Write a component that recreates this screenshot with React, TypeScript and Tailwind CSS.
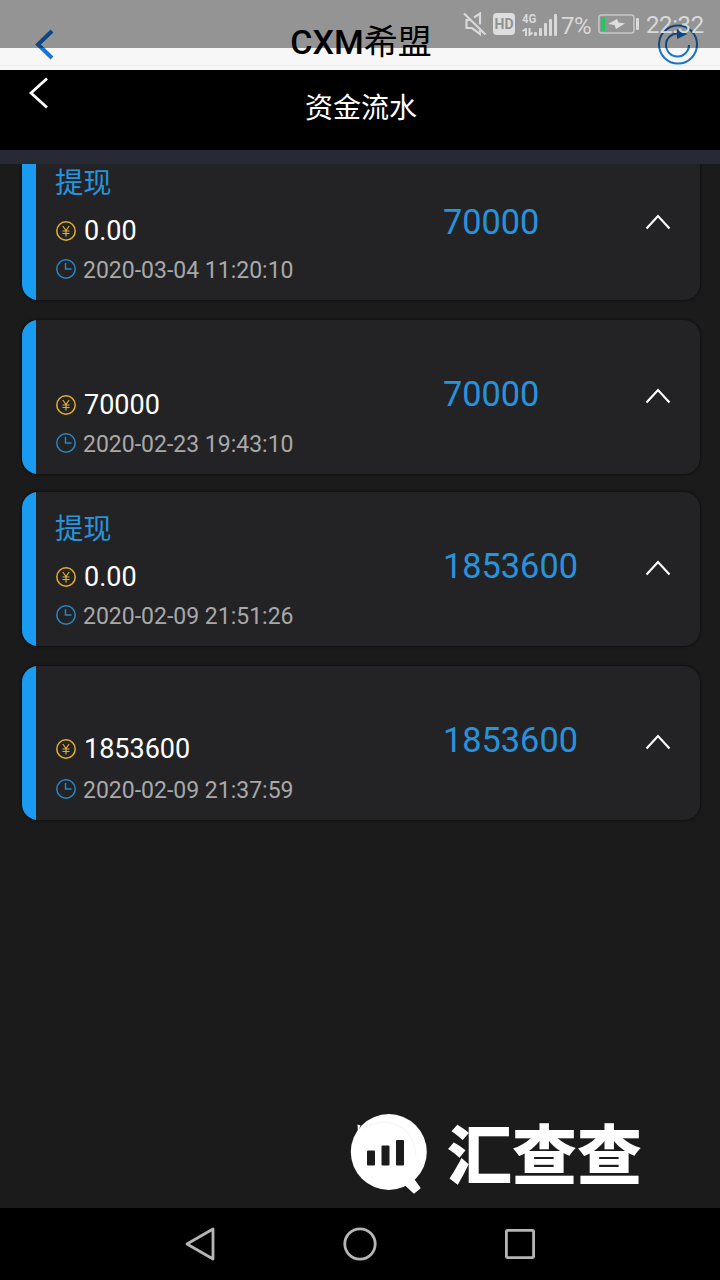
import React from 'react';

interface FlowRecord {
  label: string;
  balance: string;
  time: string;
  amount: string;
  cardClass: string;
  balanceClass: string;
  amountClass: string;
}

const records: FlowRecord[] = [
  { label: '提现', balance: '0.00', time: '2020-03-04 11:20:10', amount: '70000', cardClass: '-mt-[18px]', balanceClass: 'pt-[13px] pb-[7px]', amountClass: 'pt-[4px]' },
  { label: '', balance: '70000', time: '2020-02-23 19:43:10', amount: '70000', cardClass: 'mt-5', balanceClass: 'pt-[13px] pb-[7px]', amountClass: '' },
  { label: '提现', balance: '0.00', time: '2020-02-09 21:51:26', amount: '1853600', cardClass: 'mt-[18px]', balanceClass: 'pt-[13px] pb-[7px]', amountClass: '' },
  { label: '', balance: '1853600', time: '2020-02-09 21:37:59', amount: '1853600', cardClass: 'mt-5', balanceClass: 'pt-[11px] pb-[9px]', amountClass: '' },
];

function StatusBar() {
  return (
    <div className="absolute inset-x-0 top-0 flex h-12 items-center justify-end bg-black/40 pr-[16px] text-[24px] text-[#d9d9d9]">
      {/* mute */}
      <svg className="mr-[6px] h-6 w-6" viewBox="0 0 24 24" fill="none" stroke="currentColor" strokeWidth="2.200">
        <path d="M11 5.500l6-4v11M6.500 8H3.500v8H9l8 6v-3.500M1 1.500l21.500 21" />
      </svg>
      <div className="mr-[7px] flex h-[22px] w-[22px] items-center justify-center rounded-[4px] bg-[#dedede] text-[14px] font-bold leading-none text-[#929292]">
        HD
      </div>
      <div className="flex h-[23px] w-[36px] items-end">
        <div className="flex h-full w-[12px] flex-col justify-between">
          <span className="origin-left scale-x-[.88] text-[13px] font-bold leading-[11px]">4G</span>
          <svg className="h-2 w-3" viewBox="0 0 12 8" fill="none" stroke="currentColor" strokeWidth="2">
            <path d="M.5 3L4 1v7M7.500 0v7l3-2.500" />
          </svg>
        </div>
        <svg className="h-[22px] w-6" viewBox="0 0 24 22" fill="currentColor">
          <rect x="0" y="18" width="3" height="4" rx="1" />
          <rect x="5" y="14" width="3" height="8" rx="1" />
          <rect x="10" y="9" width="3" height="13" rx="1" />
          <rect x="15" y="5" width="3" height="17" rx="1" />
          <rect x="20" y="0" width="3" height="22" rx="1" />
        </svg>
      </div>
      <span className="ml-[3px] w-[34px] pt-[3px] leading-none tracking-[-0.5px]">7%</span>
      <svg className="ml-[3px] mr-[6px] h-5 w-[42px]" viewBox="0 0 42 20" fill="none">
        <rect x="1" y="1" width="35" height="18" rx="2.500" stroke="#c6c6c6" strokeWidth="1.500" />
        <rect x="3" y="3" width="4" height="14" fill="#20c763" />
        <path d="M10 10l9-5 1.500 3.500L27 9.500 18 15l-1.500-4z" fill="#dedede" />
        <rect x="38" y="4" width="3" height="12" rx="1" fill="#d9d9d9" />
      </svg>
      <span className="w-[58px] pt-[2px] leading-none tracking-[-0.4px]">22:32</span>
    </div>
  );
}

function CoinIcon() {
  return (
    <svg className="h-5 w-5" viewBox="0 0 20 20" fill="none" stroke="#e5af2c" strokeWidth="1.500">
      <circle cx="10" cy="10" r="9.200" />
      <path d="M6.800 5L10 9.500 13.200 5M10 9.500V15.500M6.500 10h7M6.500 12.500h7" strokeWidth="1.200" />
    </svg>
  );
}

function ClockIcon() {
  return (
    <svg className="h-5 w-5" viewBox="0 0 20 20" fill="none" stroke="#2787c5" strokeWidth="1.500">
      <circle cx="10" cy="10" r="9.200" />
      <path d="M9.500 4v6H15.500" />
    </svg>
  );
}

function RecordCard({ record }: { record: FlowRecord }) {
  return (
    <div className={`flex h-[154px] shrink-0 overflow-hidden rounded-[16px] bg-[#232325] shadow-[0_0_2px_1px_#111111] ${record.cardClass}`}>
      <div className="w-[14px] bg-[#199bf1]" />
      <div className="w-[387px] pl-[19px] pt-[21px]">
        <div className="h-[34px] text-[28.300px] leading-[34px] text-[#2793dd]">{record.label}</div>
        <div className={record.balanceClass}>
          <div className="flex h-[34px] items-center gap-2 pl-[1px] text-[27px] leading-[34px] text-white">
            <CoinIcon />
            <span>{record.balance}</span>
          </div>
        </div>
        <div className="flex h-7 items-center gap-[7px] pl-[1px] text-[23px] leading-7 text-[#a8a8a9]">
          <ClockIcon />
          <span className="pt-[3px]">{record.time}</span>
        </div>
      </div>
      <div className={`flex h-[150px] w-[222px] items-center pl-5 text-[34.300px] text-[#2793dd] ${record.amountClass}`}>
        {record.amount}
      </div>
      <svg className="mt-[67px] h-[18px] w-[26px]" viewBox="0 0 26 18" fill="none" stroke="white" strokeWidth="2.200">
        <path d="M1.500 15.500L13 3l11.500 12.500" />
      </svg>
    </div>
  );
}

function Watermark() {
  return (
    <div className="flex h-[96px] shrink-0 items-center pl-[350px] text-white">
      <svg className="h-[84px] w-[80px] shrink-0" viewBox="0 0 80 84">
        <circle cx="38.800" cy="40" r="38" fill="white" />
        {/* small step where the ring overlaps the lens */}
        <path d="M7.500 12.500l3 1-1.500 3.500 2 0-3 4z" fill="white" />
        <path d="M56 73l7-6 6.500 9-5.500 4.500z" fill="white" stroke="white" strokeWidth="2" strokeLinejoin="round" />
        <path d="M14 17Q24 9 38 10.500Q64 15 66 44" fill="none" stroke="#f8f8f8" strokeWidth="1.500" />
        <rect x="17" y="38.500" width="8" height="15" rx="1" fill="#1b1b1b" />
        <rect x="31.500" y="33.500" width="8" height="20" rx="1" fill="#1b1b1b" />
        <rect x="46" y="28" width="8" height="25.500" rx="1" fill="#1b1b1b" />
      </svg>
      <span className="ml-[17px] whitespace-nowrap pt-[5px] text-[65px] font-black leading-[84px]">汇查查</span>
    </div>
  );
}

export default function App() {
  return (
    <div className="flex h-[1280px] w-[720px] flex-col overflow-hidden bg-[#1b1b1b] font-[Roboto,'Noto_Sans_CJK_SC',sans-serif]">
      <div className="relative h-[70px] shrink-0 bg-[#f7f7f7]">
        <div className="flex h-[66px] items-start justify-between border-b border-[#ececec] pl-[34px] pr-[21px]">
          <svg className="mt-7 h-8 w-[30px]" viewBox="0 0 30 32" fill="none" stroke="#1974dc" strokeWidth="4">
            <path d="M18 3L4 16.500 18 30" />
          </svg>
          <h1 className="mt-[18px] text-[34px] font-medium leading-[48px] text-black">
            CXM<span className="font-normal">希盟</span>
          </h1>
          <svg className="mt-6 h-[41px] w-[41px]" viewBox="0 0 41 41" fill="none" stroke="#1974cd" strokeWidth="2">
            <circle cx="20" cy="20.500" r="19" />
            <path d="M31 21A11.500 11.500 0 1 1 20 9.500" />
            <path d="M19 5l10.500 5-10.500 5z" fill="#1974cd" stroke="none" />
          </svg>
        </div>
        <StatusBar />
      </div>

      <div className="flex h-20 shrink-0 items-start bg-black px-7 text-white">
        <svg className="mt-[7px] h-8 w-[22px]" viewBox="0 0 22 32" fill="none" stroke="currentColor" strokeWidth="2.800">
          <path d="M19 1.500L3 16l16 14.500" />
        </svg>
        <h2 className="mt-[19px] flex-1 pr-5 text-center text-[28px] leading-10">资金流水</h2>
      </div>
      <div className="h-[14px] shrink-0 bg-[#272935]" />

      <div className="flex flex-1 flex-col overflow-hidden pl-[22px] pr-5">
        {records.map(record => (
          <RecordCard key={record.time} record={record} />
        ))}
      </div>

      <Watermark />
      <div className="h-[6px] shrink-0" />
      <div className="flex h-[72px] shrink-0 items-center justify-center gap-[126px] bg-black text-[#b5b5b5]">
        <svg className="h-[34px] w-[34px]" viewBox="0 0 34 34" fill="none" stroke="currentColor" strokeWidth="2.800" strokeLinejoin="round">
          <path d="M30 2v30L4 17z" />
        </svg>
        <svg className="h-[34px] w-[34px]" viewBox="0 0 34 34" fill="none" stroke="currentColor" strokeWidth="2.800">
          <circle cx="17" cy="17" r="15.200" />
        </svg>
        <svg className="h-[34px] w-[34px]" viewBox="0 0 34 34" fill="none" stroke="currentColor" strokeWidth="2.800">
          <rect x="3.400" y="3.400" width="27.200" height="27.200" rx="1" />
        </svg>
      </div>
    </div>
  );
}
